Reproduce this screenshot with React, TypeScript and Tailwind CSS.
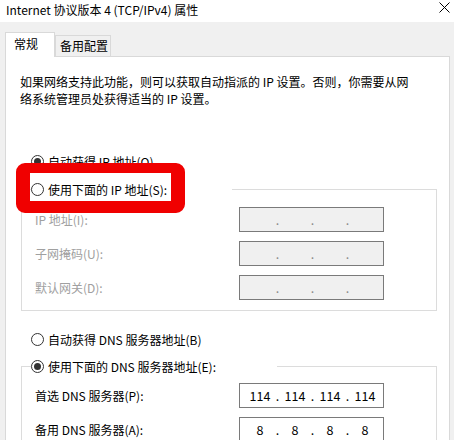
import React from "react";

function Radio({ checked, label }: { checked?: boolean; label: string }) {
  return (
    <div className="flex items-center gap-[4px] h-[20px]">
      <span className="w-[13px] h-[13px] rounded-full border border-[#333333] bg-white flex items-center justify-center shrink-0">
        {checked ? <span className="w-[7px] h-[7px] rounded-full bg-[#333333]" /> : null}
      </span>
      <span className="text-black whitespace-nowrap leading-[17px]">{label}</span>
    </div>
  );
}

function IpBox({ values, disabled }: { values?: string[]; disabled?: boolean }) {
  const segs = values ?? ["", "", "", ""];
  return (
    <div
      className={
        "w-[145px] h-[25px] border flex items-center pl-[5px] " +
        (disabled ? "bg-[#f0f0f0] border-[#7a7a7a]" : "bg-white border-[#7a7a7a]")
      }
    >
      {segs.map((s, i) => (
        <React.Fragment key={i}>
          <span className="w-[30px] text-center text-black text-[12.5px] leading-[17px]">{s}</span>
          {i < 3 ? (
            <span
              className={
                "w-[5px] text-center text-[12.5px] leading-[17px] " +
                (disabled ? "text-[#8a8a8a]" : "text-black")
              }
            >
              .
            </span>
          ) : null}
        </React.Fragment>
      ))}
    </div>
  );
}

function Row({
  label,
  disabled,
  values,
}: {
  label: string;
  disabled?: boolean;
  values?: string[];
}) {
  return (
    <div className="flex items-center h-[25px]">
      <span
        className={
          "w-[204px] whitespace-nowrap leading-[17px] " +
          (disabled ? "text-[#a0a0a0]" : "text-black")
        }
      >
        {label}
      </span>
      <IpBox values={values} disabled={disabled} />
    </div>
  );
}

export default function App() {
  return (
    <div className="relative w-[454px] h-[440px] overflow-hidden bg-[#f0f0f0] text-[12px] font-['Noto_Sans_CJK_SC','Microsoft_YaHei',sans-serif] text-black">
      {/* Title bar */}
      <div className="h-[22px] bg-white flex justify-between pl-[6px] pr-[4px]">
        <span className="leading-[17px] pt-[1px] whitespace-nowrap">
          Internet 协议版本 4 (TCP/IPv4) 属性
        </span>
        <svg width="11" height="11" viewBox="0 0 11 11" className="mt-[2px]">
          <path d="M0.5 0.5 L10.5 10.5 M10.5 0.5 L0.5 10.5" stroke="#000" strokeWidth="1" fill="none" />
        </svg>
      </div>

      <div className="pt-[10px] pl-[5px] pr-[4px]">
        {/* Tabs */}
        <div className="relative z-10 flex items-end h-[25px] mb-[-1px]">
          <div className="h-[25px] w-[50px] bg-white border border-b-0 border-[#d9d9d9] pl-[8px] pt-[2px] leading-[17px]">
            常规
          </div>
          <div className="h-[21px] w-[56px] mb-[1px] bg-[#f0f0f0] border border-b-0 border-[#d9d9d9] pl-[4px] pt-[1px] leading-[17px] whitespace-nowrap">
            备用配置
          </div>
        </div>

        {/* Panel */}
        <div className="bg-white border border-[#d9d9d9] h-[400px]">
          <div className="pt-[16px] pl-[14px] whitespace-nowrap">
            <div className="h-[17px] leading-[17px]">
              如果网络支持此功能，则可以获取自动指派的 IP 设置。否则，你需要从网
            </div>
            <div className="h-[17px] leading-[17px]">络系统管理员处获得适当的 IP 设置。</div>
          </div>

          <div className="mt-[44px] pl-[25px]">
            <Radio checked label="自动获得 IP 地址(O)" />
          </div>

          <fieldset className="ml-[15px] w-[416px] mt-[8px] border border-[#dcdcdc] pl-[13px] pt-[8px] pb-[10px]">
            <legend className="ml-[-4px] w-[201px]">
              <Radio label="使用下面的 IP 地址(S):" />
            </legend>
            <div className="flex flex-col gap-[9px]">
              <Row label="IP 地址(I):" disabled />
              <Row label="子网掩码(U):" disabled />
              <Row label="默认网关(D):" disabled />
            </div>
          </fieldset>

          <div className="mt-[18px] pl-[25px]">
            <Radio label="自动获得 DNS 服务器地址(B)" />
          </div>

          <fieldset className="ml-[15px] w-[416px] mt-[7px] border border-[#dcdcdc] pl-[13px] pt-[7px] pb-[10px]">
            <legend className="ml-[-4px] w-[246px]">
              <Radio checked label="使用下面的 DNS 服务器地址(E):" />
            </legend>
            <div className="flex flex-col gap-[9px]">
              <Row label="首选 DNS 服务器(P):" values={["114", "114", "114", "114"]} />
              <Row label="备用 DNS 服务器(A):" values={["8", "8", "8", "8"]} />
            </div>
          </fieldset>
        </div>
      </div>

      {/* Red annotation box */}
      <div className="absolute left-[16px] top-[163px] w-[169px] h-[50px] border-t-[10px] border-b-[12px] border-l-[14px] border-r-[14px] border-[#f00000] rounded-[9px]" />
    </div>
  );
}
